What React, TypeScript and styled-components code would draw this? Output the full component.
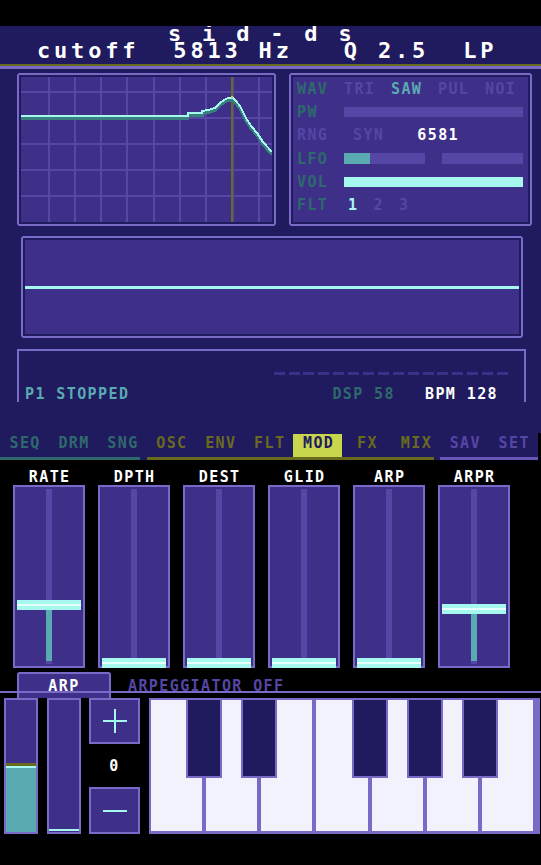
import styled, { createGlobalStyle, css } from "styled-components";

const c = {
  navy: "#201a5e",
  panel: "#3e3088",
  edge: "#7a6ac8",
  track: "#5647a6",
  dim: "#5546a6",
  cyan: "#a6f8ee",
  cyanHi: "#e4fffb",
  teal: "#5aaab2",
  deepTeal: "#2e6a6c",
  shadow: "#3a7f80",
  olive: "#6a6a1e",
  lime: "#c8d64e",
  key: "#f2f2fc",
};

const GlobalStyle = createGlobalStyle`
  html, body {
    margin: 0;
    background: #000;
  }
  body {
    font-family: "DejaVu Sans Mono", "Liberation Mono", monospace;
    font-weight: bold;
  }
`;

const notched = css`
  clip-path: polygon(
    2px 0,
    calc(100% - 2px) 0,
    100% 2px,
    100% calc(100% - 2px),
    calc(100% - 2px) 100%,
    2px 100%,
    0 calc(100% - 2px),
    0 2px
  );
`;

const smallText = css`
  font-size: 15px;
  letter-spacing: 1.4px;
  line-height: 16px;
  white-space: pre;
`;

/* ---------- data ---------- */

const gridX = Array.from({ length: 9 }, (_, i) => 26.5 + i * 26.3);
const gridY = Array.from({ length: 5 }, (_, i) => 13.7 + i * 26.1);
const response: [number, number][] = [
  [0, 38.5],
  [166.5, 38.5],
  [166.5, 36],
  [181, 36],
  [181, 34],
  [187, 33],
  [194, 31],
  [199, 26],
  [203, 23],
  [207, 21],
  [212, 21],
  [215, 24],
  [219, 29],
  [222, 35],
  [226, 43],
  [231, 50],
  [236, 56],
  [242, 65],
  [251, 75],
];

const faders = [
  { label: "RATE", value: 0.335 },
  { label: "DPTH", value: 0 },
  { label: "DEST", value: 0 },
  { label: "GLID", value: 0 },
  { label: "ARP", value: 0 },
  { label: "ARPR", value: 0.312 },
];

const tabGroups = [
  { text: c.deepTeal, line: c.deepTeal, trim: 7, tabs: ["SEQ", "DRM", "SNG"] },
  { text: c.olive, line: c.olive, trim: 6, tabs: ["OSC", "ENV", "FLT", "MOD", "FX", "MIX"] },
  { text: c.dim, line: "#6656b8", trim: 0, tabs: ["SAV", "SET"] },
];

const WHITE_KEYS = 7;
const KEY_W = (391 - 9 - 6 * 4) / WHITE_KEYS;
const blackAfter = [0, 1, 3, 4, 5];

/* ---------- header ---------- */

const Screen = styled.div`
  width: 541px;
  min-height: 865px;
  padding-top: 26px;
  box-sizing: border-box;
  background: #000;
`;

const Header = styled.header`
  height: 38px;
  overflow: hidden;
  background: ${c.navy};
  color: #fff;
  font-size: 22px;
  line-height: 17px;
  letter-spacing: 3.8px;
  white-space: pre;
`;

const Title = styled.div`
  margin-top: -1px;
  padding-left: 168px;
`;

const Readout = styled.div`
  padding-left: 37px;
`;

const HeaderRule = styled.div`
  height: 2px;
  background: ${c.olive};
  border-bottom: 3px solid ${c.edge};
`;

/* ---------- upper deck ---------- */

const Deck = styled.main`
  height: 364px;
  padding-top: 4px;
  box-sizing: border-box;
  background: ${c.navy};
  display: flex;
  flex-direction: column;
`;

const TopRow = styled.div`
  display: flex;
  gap: 13px;
  padding-left: 17px;
  height: 153px;
`;

const Panel = styled.div`
  box-sizing: border-box;
  border: 2px solid ${c.edge};
  padding: 2px;
  background: ${c.panel};
  box-shadow: inset 0 0 0 2px ${c.navy};
  ${notched}
`;

const FilterPanel = styled(Panel)`
  width: 259px;
  height: 153px;
  svg {
    display: block;
  }
`;

const ParamPanel = styled(Panel)`
  width: 243px;
  height: 153px;
  padding: 2px 7px 2px 6px;
  display: flex;
  flex-direction: column;
`;

const ParamRow = styled.div`
  height: 23.3px;
  display: grid;
  grid-template-columns: 47px 1fr;
  align-items: center;
  ${smallText}
`;

const ParamLabel = styled.span<{ $muted?: boolean }>`
  color: ${(p) => (p.$muted ? c.dim : c.deepTeal)};
`;

const Options = styled.div`
  display: grid;
  grid-template-columns: repeat(4, 47px);
`;

const Option = styled.span<{ $on?: boolean }>`
  color: ${(p) => (p.$on ? c.teal : c.dim)};
`;

const Bar = styled.div<{ $lit?: boolean }>`
  height: 10px;
  background: ${(p) => (p.$lit ? c.cyan : c.track)};
`;

const LfoBars = styled.div`
  display: grid;
  grid-template-columns: 81px 81px;
  gap: 17px;
`;

const LfoBar = styled.div`
  height: 11px;
  background: ${c.track};
  display: flex;
`;

const LfoFill = styled.div`
  background: ${c.teal};
`;

const RangeValues = styled.div`
  display: flex;
  gap: 33px;
  padding-left: 9px;
`;

const Filters = styled.div`
  display: flex;
  padding-left: 4px;
`;

const FilterNum = styled.span<{ $on?: boolean }>`
  width: 25.5px;
  color: ${(p) => (p.$on ? c.cyan : c.dim)};
`;

const WavePanel = styled(Panel)`
  margin: 10px 18px 0 21px;
  height: 102px;
  display: flex;
  align-items: center;
`;

const WaveLine = styled.div`
  flex: 1;
  height: 3px;
  background: ${c.cyan};
`;

const StatusPanel = styled.section`
  margin: 11px 15px 0 17px;
  height: 53px;
  box-sizing: border-box;
  border: 2px solid ${c.edge};
  border-bottom: none;
  padding: 0 16px 0 6px;
  display: flex;
  flex-direction: column;
`;

const Dashes = styled.div`
  align-self: flex-end;
  margin-top: 21px;
  display: flex;
  gap: 3.9px;
`;

const Dash = styled.span`
  width: 11px;
  height: 3px;
  background: ${c.panel};
`;

const StatusLine = styled.div`
  margin-top: 11px;
  padding-right: 10px;
  display: flex;
  ${smallText}
`;

const StatusText = styled.span<{ $color: string }>`
  color: ${(p) => p.$color};
`;

const StatusRight = styled.div`
  margin-left: auto;
  display: flex;
  gap: 30px;
`;

/* ---------- tabs ---------- */

const TabBar = styled.nav`
  width: 538px;
  height: 27px;
  background: ${c.navy};
  display: flex;
`;

const TabGroup = styled.div<{ $count: number }>`
  flex: ${(p) => p.$count} 0 0;
  display: flex;
  flex-direction: column;
`;

const TabRow = styled.div`
  flex: 1;
  display: flex;
  padding-top: 1px;
`;

const Tab = styled.div<{ $color: string; $active?: boolean }>`
  flex: 1;
  text-align: center;
  padding-left: 1.4px;
  ${smallText}
  line-height: 19px;
  color: ${(p) => (p.$active ? c.navy : p.$color)};
  background: ${(p) => (p.$active ? c.lime : "transparent")};
`;

const TabLine = styled.div<{ $color: string; $trim: number }>`
  height: 3px;
  margin-right: ${(p) => p.$trim}px;
  background: ${(p) => p.$color};
`;

/* ---------- faders ---------- */

const FaderRow = styled.div`
  display: flex;
  gap: 13px;
  padding-left: 13px;
`;

const FaderColumn = styled.div`
  width: 72px;
  display: flex;
  flex-direction: column;
`;

const FaderLabel = styled.div`
  padding: 9px 0 0 1.4px;
  text-align: center;
  color: #fff;
  ${smallText}
`;

const FaderBody = styled.div`
  position: relative;
  height: 183px;
  box-sizing: border-box;
  border: 2px solid ${c.edge};
  padding: 2px 0;
  background: ${c.panel};
  display: flex;
  justify-content: center;
`;

const FaderTrack = styled.div`
  width: 6px;
  background: ${c.track};
`;

const FaderFill = styled.div`
  position: absolute;
  left: 31px;
  width: 6px;
  background: ${c.teal};
`;

const FaderHandle = styled.div`
  position: absolute;
  left: 2px;
  right: 2px;
  height: 10px;
  background: linear-gradient(
    ${c.cyan} 0 4px,
    ${c.cyanHi} 4px 6px,
    ${c.cyan} 6px
  );
`;

/* ---------- arpeggiator ---------- */

const ArpRow = styled.div`
  position: relative;
  margin-top: 4px;
  height: 26px;
  display: flex;
  &::after {
    content: "";
    position: absolute;
    left: 0;
    right: 0;
    top: 19px;
    height: 2px;
    background: ${c.edge};
  }
`;

const ArpTab = styled.div`
  margin-left: 17px;
  width: 94px;
  box-sizing: border-box;
  border: 2px solid ${c.edge};
  border-bottom: none;
  padding-top: 4px;
  background: ${c.panel};
  color: #fff;
  text-align: center;
  ${smallText}
  clip-path: polygon(2px 0, calc(100% - 2px) 0, 100% 2px, 100% 100%, 0 100%, 0 2px);
`;

const ArpStatus = styled.div`
  margin-left: 17px;
  padding-top: 6px;
  color: ${c.dim};
  ${smallText}
`;

const Controls = styled.div`
  display: flex;
  gap: 9px;
  padding-left: 4px;
  height: 136px;
`;

const Meter = styled.div`
  width: 34px;
  box-sizing: border-box;
  border: 2px solid ${c.edge};
  background: ${c.panel};
  display: flex;
  flex-direction: column;
  justify-content: flex-end;
`;

const MeterFill = styled.div<{ $level: number }>`
  height: ${(p) => p.$level}px;
  box-sizing: border-box;
  background: ${c.teal};
  border-top: 3px solid ${c.olive};
  box-shadow: inset 0 2px 0 ${c.cyan};
`;

const MeterFloor = styled.div`
  height: 2px;
  margin-bottom: 1px;
  background: ${c.cyan};
`;

const Stepper = styled.div`
  width: 51px;
  margin-left: -1px;
  display: flex;
  flex-direction: column;
`;

const StepButton = styled.button<{ $h: number }>`
  height: ${(p) => p.$h}px;
  padding: 0;
  box-sizing: border-box;
  border: 2px solid ${c.edge};
  background: ${c.panel};
  display: grid;
  place-items: center;
  svg {
    display: block;
  }
`;

const StepValue = styled.div`
  flex: 1;
  display: grid;
  place-items: center;
  color: #fff;
  ${smallText}
`;

const Keyboard = styled.div`
  position: relative;
  width: 391px;
  box-sizing: border-box;
  padding: 2px 7px 3px 2px;
  background: ${c.edge};
  display: flex;
  gap: 4px;
`;

const WhiteKey = styled.div`
  flex: 1;
  background: ${c.key};
`;

const BlackKey = styled.div<{ $left: number }>`
  position: absolute;
  top: 0;
  left: ${(p) => p.$left}px;
  width: 36px;
  height: 80px;
  box-sizing: border-box;
  border: 2px solid ${c.edge};
  background: ${c.navy};
`;

/* ---------- pieces ---------- */

const FilterGraph = () => {
  const line = response.map(([x, y]) => `${x},${y}`).join(" ");
  const under = response.map(([x, y]) => `${x},${y + 2.5}`).join(" ");
  return (
    <svg width="251" height="145" viewBox="0 0 251 145" shapeRendering="crispEdges">
      {gridX.map((x) => (
        <rect key={`x${x}`} x={x} y={0} width={2} height={145} fill={c.track} />
      ))}
      {gridY.map((y) => (
        <rect key={`y${y}`} x={0} y={y} width={251} height={2} fill={c.track} />
      ))}
      <rect x={209.5} y={0} width={2} height={145} fill={c.olive} />
      <polyline points={under} fill="none" stroke={c.shadow} strokeWidth={3} />
      <polyline points={line} fill="none" stroke={c.cyan} strokeWidth={2} />
      <rect x={209.5} y={19} width={2} height={2} fill={c.lime} />
    </svg>
  );
};

const Fader = ({ label, value }: { label: string; value: number }) => {
  const top = Math.round(173 - value * 173);
  return (
    <FaderColumn>
      <FaderLabel>{label}</FaderLabel>
      <FaderBody>
        <FaderTrack />
        {value > 0 && <FaderFill style={{ top: top + 8, height: 166 - top }} />}
        <FaderHandle style={{ top: top - 2 }} />
      </FaderBody>
    </FaderColumn>
  );
};

const App = () => {
  return (
    <Screen>
      <GlobalStyle />
      <Header>
        <Title>s i d - d s</Title>
        <Readout>cutoff  5813 Hz   Q 2.5  LP</Readout>
      </Header>
      <HeaderRule />

      <Deck>
        <TopRow>
          <FilterPanel>
            <FilterGraph />
          </FilterPanel>
          <ParamPanel>
            <ParamRow>
              <ParamLabel>WAV</ParamLabel>
              <Options>
                {["TRI", "SAW", "PUL", "NOI"].map((w) => (
                  <Option key={w} $on={w === "SAW"}>
                    {w}
                  </Option>
                ))}
              </Options>
            </ParamRow>
            <ParamRow>
              <ParamLabel>PW</ParamLabel>
              <Bar />
            </ParamRow>
            <ParamRow>
              <ParamLabel $muted>RNG</ParamLabel>
              <RangeValues>
                <Option>SYN</Option>
                <StatusText $color="#fff">6581</StatusText>
              </RangeValues>
            </ParamRow>
            <ParamRow>
              <ParamLabel>LFO</ParamLabel>
              <LfoBars>
                <LfoBar>
                  <LfoFill style={{ width: 26 }} />
                </LfoBar>
                <LfoBar />
              </LfoBars>
            </ParamRow>
            <ParamRow>
              <ParamLabel>VOL</ParamLabel>
              <Bar $lit />
            </ParamRow>
            <ParamRow>
              <ParamLabel>FLT</ParamLabel>
              <Filters>
                {["1", "2", "3"].map((n) => (
                  <FilterNum key={n} $on={n === "1"}>
                    {n}
                  </FilterNum>
                ))}
              </Filters>
            </ParamRow>
          </ParamPanel>
        </TopRow>

        <WavePanel>
          <WaveLine />
        </WavePanel>

        <StatusPanel>
          <Dashes>
            {Array.from({ length: 16 }, (_, i) => (
              <Dash key={i} />
            ))}
          </Dashes>
          <StatusLine>
            <StatusText $color={c.teal}>P1 STOPPED</StatusText>
            <StatusRight>
              <StatusText $color={c.deepTeal}>DSP 58</StatusText>
              <StatusText $color="#fff">BPM 128</StatusText>
            </StatusRight>
          </StatusLine>
        </StatusPanel>
      </Deck>

      <TabBar>
        {tabGroups.map((g) => (
          <TabGroup key={g.tabs[0]} $count={g.tabs.length}>
            <TabRow>
              {g.tabs.map((t) => (
                <Tab key={t} $color={g.text} $active={t === "MOD"}>
                  {t}
                </Tab>
              ))}
            </TabRow>
            <TabLine $color={g.line} $trim={g.trim} />
          </TabGroup>
        ))}
      </TabBar>

      <FaderRow>
        {faders.map((f) => (
          <Fader key={f.label} {...f} />
        ))}
      </FaderRow>

      <ArpRow>
        <ArpTab>ARP</ArpTab>
        <ArpStatus>ARPEGGIATOR OFF</ArpStatus>
      </ArpRow>

      <Controls>
        <Meter>
          <MeterFill $level={69} />
        </Meter>
        <Meter>
          <MeterFloor />
        </Meter>
        <Stepper>
          <StepButton $h={46} aria-label="up">
            <svg width="24" height="24" viewBox="0 0 24 24" shapeRendering="crispEdges">
              <rect x="11" y="0" width="2" height="24" fill={c.cyan} />
              <rect x="0" y="11" width="24" height="2" fill={c.cyan} />
            </svg>
          </StepButton>
          <StepValue>0</StepValue>
          <StepButton $h={47} aria-label="down">
            <svg width="24" height="2" viewBox="0 0 24 2" shapeRendering="crispEdges">
              <rect x="0" y="0" width="24" height="2" fill={c.cyan} />
            </svg>
          </StepButton>
        </Stepper>
        <Keyboard>
          {Array.from({ length: WHITE_KEYS }, (_, i) => (
            <WhiteKey key={i} />
          ))}
          {blackAfter.map((k) => (
            <BlackKey key={k} $left={2 + (k + 1) * KEY_W + k * 4 + 2 - 18} />
          ))}
        </Keyboard>
      </Controls>
    </Screen>
  );
};

export default App;
